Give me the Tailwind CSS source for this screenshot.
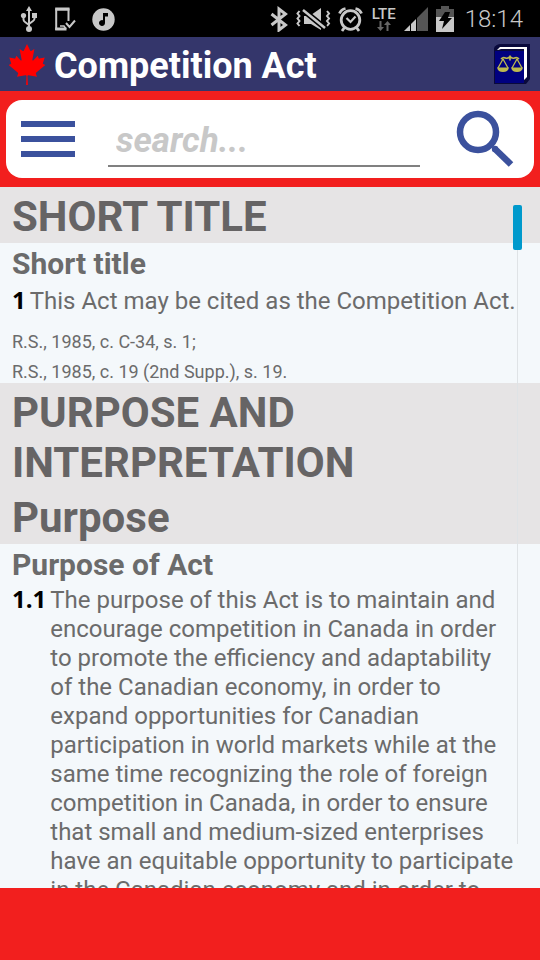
<!DOCTYPE html>
<html lang="en">
<head>
<meta charset="utf-8">
<meta name="viewport" content="width=device-width, initial-scale=1">
<title>Competition Act</title>
<script src="https://cdn.jsdelivr.net/npm/@tailwindcss/browser@4"></script>
</head>
<body class="flex h-dvh flex-col overflow-hidden bg-[#f4f8fb] font-[Roboto,'Liberation_Sans',sans-serif] text-[#6b6b6b]">

<!-- Status bar -->
<div class="flex h-[37px] shrink-0 items-center justify-between bg-black pr-[17px] pl-5 text-[#c8c8c8]">
  <div class="flex items-center gap-4">
    <svg class="h-[28px] w-[18px]" viewBox="0 0 18 28" fill="none" stroke="currentColor" stroke-width="2" aria-hidden="true">
      <path d="M9 5v19M3.500 11v3.500q0 1.500 1.500 2.500l4 3M14.500 10v3.500q0 1.500-1.500 2.500l-4 3"/>
      <path d="M9 1l3 5H6z" fill="currentColor" stroke="none"/>
      <circle cx="9" cy="24" r="3" fill="currentColor" stroke="none"/>
      <circle cx="3.500" cy="10.500" r="2.600" fill="currentColor" stroke="none"/>
      <path d="M12 8h5v5h-5z" fill="currentColor" stroke="none"/>
    </svg>
    <svg class="h-[26px] w-[22px]" viewBox="0 0 22 26" fill="none" stroke="currentColor" aria-hidden="true">
      <path d="M14.500 15V3.500H2.200v19.500H9" stroke-width="2"/>
      <path d="M1.200 3h14.300M1.200 23h11.300" stroke-width="3"/>
      <path d="M6 20h4l2 3" stroke-width="1.500"/>
      <path d="M12 17l3.500 4L21 14.500" stroke-width="2"/>
    </svg>
    <svg class="h-[24px] w-[24px]" viewBox="0 0 24 24" aria-hidden="true">
      <circle cx="11.500" cy="12.500" r="11.200" fill="currentColor"/>
      <path d="M11 6h5v3.500h-3V16a3 3 0 1 1-2-2.800z" fill="#000"/>
    </svg>
  </div>
  <div class="flex items-center gap-[7px]">
    <svg class="h-[26px] w-[18px]" viewBox="0 0 18 26" fill="none" stroke="currentColor" stroke-width="3" aria-hidden="true">
      <path d="M1.500 8l14 11-6.500 5V3l6.500 5-14 11"/>
    </svg>
    <svg class="h-[26px] w-[36px]" viewBox="0 0 36 26" fill="none" stroke="currentColor" aria-hidden="true">
      <path d="M4.500 5l-2 2.500 2 2.500-2 2.500 2 2.500-2 2.500 2 2.500M32 5l2 2.500-2 2.500 2 2.500-2 2.500 2 2.500-2 2.500" stroke-width="2"/>
      <path d="M9 10h5l12 9v5l-10-6H9zM16 9l10-7v16z" fill="currentColor" stroke="none"/>
      <path d="M8 4l22 18" stroke="#000" stroke-width="5.500"/>
      <path d="M8 4l22 18" stroke-width="2.500"/>
    </svg>
    <svg class="h-[26px] w-[26px]" viewBox="0 0 26 26" fill="none" stroke="currentColor" aria-hidden="true">
      <circle cx="12.500" cy="14" r="9.300" stroke-width="2.800"/>
      <path d="M8.500 12l4 4 5-5.500" stroke-width="2.200"/>
      <path d="M1.500 7.500q1.500-4 6-5M23.500 7.500q-1.500-4-6-5" stroke-width="2.800"/>
      <path d="M6.500 21.500L4 25M18.500 21.500L21 25" stroke-width="2.800"/>
    </svg>
    <div class="flex w-[26px] flex-col items-center">
      <span class="text-[15px] leading-[14px] font-medium">LTE</span>
      <svg class="h-[10px] w-[14px]" viewBox="0 0 14 10" fill="#666" aria-hidden="true">
        <path d="M2.500 0h2v6H7L3.500 10 0 6h2.500zM9.500 10h2V4H14l-3.500-4L7 4h2.500z"/>
      </svg>
    </div>
    <svg class="h-[26px] w-[24px]" viewBox="0 0 24 26" aria-hidden="true">
      <path d="M0 25l6-6v6z" fill="currentColor"/>
      <path d="M7 18l5-5v12H7z" fill="currentColor"/>
      <path d="M13 12l11-11v24H13z" fill="#555"/>
    </svg>
    <svg class="h-[28px] w-[20px]" viewBox="0 0 20 28" aria-hidden="true">
      <path d="M6 1h8v3h5v9H1V4h5z" fill="#555"/>
      <path d="M1 12h18v15H1z" fill="currentColor"/>
      <path d="M10 7h5l-2 6h4L7 24l2-8H4z" fill="#000"/>
    </svg>
    <time class="ml-[3px] text-[24px] leading-7 font-light">18:14</time>
  </div>
</div>

<!-- Title bar -->
<header class="flex h-[54px] shrink-0 items-center justify-between bg-[#34366b] pr-2 pl-2">
  <div class="flex items-center gap-2">
    <svg class="h-[41px] w-[38px]" viewBox="-1930 -2010 3860 4040" preserveAspectRatio="none" fill="#ff0000" aria-hidden="true">
      <path d="m-90 2030 45-863a95 95 0 0 0-111-98l-859 151 116-320a65 65 0 0 0-20-73l-941-762 212-99a65 65 0 0 0 34-79l-186-572 542 115a65 65 0 0 0 73-38l105-247 423 454a65 65 0 0 0 111-57l-204-1052 327 189a65 65 0 0 0 91-27l332-652 332 652a65 65 0 0 0 91 27l327-189-204 1052a65 65 0 0 0 111 57l423-454 105 247a65 65 0 0 0 73 38l542-115-186 572a65 65 0 0 0 34 79l212 99-941 762a65 65 0 0 0-20 73l116 320-859-151a95 95 0 0 0-111 98l45 863z"/>
    </svg>
    <h1 class="pt-1 text-[36px] leading-10 font-bold text-white">Competition Act</h1>
  </div>
  <button type="button" aria-label="Legislation" class="h-[42px] w-[40px]">
    <svg class="h-full w-full" viewBox="0 0 40 42" aria-hidden="true">
      <path d="M2 5Q4 1 9 1h29v35l-4 5H2z" fill="#0a0a3c"/>
      <path d="M5 7l3-3h27v30l-3 3V7z" fill="#fff"/>
      <path d="M6 7l3-1h23v2z" fill="#0a0a3c"/>
      <path d="M3 8h29v32H3z" fill="#000080"/>
      <g fill="none" stroke="#bdb94e" stroke-width="1.600">
        <path d="M9 16q2-2 4.500-1t4.500-1.500q2 2.500 4.500 1.500t4.500 1M18 12.500v5"/>
        <path d="M11 16l-5 9M11 16l5 9M25 16l-5 9M25 16l5 9" stroke-width="1.300"/>
      </g>
      <path d="M5 24.500h12q-1 4.500-6 4.500t-6-4.500zM19 24.500h12q-1 4.500-6 4.500t-6-4.500z" fill="#bdb94e"/>
    </svg>
  </button>
</header>

<!-- Search -->
<div class="shrink-0 bg-[#f21f1e] px-[6px] py-[9px]">
  <form class="flex h-[78px] items-center rounded-[16px] bg-white pr-5 pl-[15px]" role="search">
    <button type="button" aria-label="Menu" class="flex w-[54px] shrink-0 flex-col gap-[9px]">
      <span class="h-[6px] bg-[#3b519d]"></span>
      <span class="h-[6px] bg-[#3b519d]"></span>
      <span class="h-[6px] bg-[#3b519d]"></span>
    </button>
    <input type="search" aria-label="Search" placeholder="search..." class="mr-9 ml-[33px] h-[56px] min-w-0 flex-1 border-b-2 border-[#808080] px-2 pt-1 text-[35px] font-bold italic outline-none placeholder:text-[#c8c8c8]">
    <button type="submit" aria-label="Submit search" class="h-[58px] w-[58px] shrink-0">
      <svg class="h-full w-full" viewBox="0 0 58 58" fill="none" stroke="#3b519d" aria-hidden="true">
        <circle cx="22" cy="22" r="18" stroke-width="6.500"/>
        <path d="M38.500 38.500L55 54.500" stroke-width="6.500"/>
        <circle cx="39" cy="39" r="3.200" fill="#3b519d" stroke="none"/>
      </svg>
    </button>
  </form>
</div>

<!-- Document -->
<div class="relative min-h-0 flex-1">
  <main class="h-full overflow-y-auto [scrollbar-width:none]">
    <div class="bg-[#e6e4e5] px-3 pt-[5px] pb-px text-[42px] leading-[50px] font-bold text-[#666465]">
      <h2>SHORT TITLE</h2>
    </div>
    <section class="px-3 pt-1">
      <h3 class="text-[30px] leading-[34px] font-bold">Short title</h3>
      <div class="mt-1 flex items-baseline gap-1 text-[24px] leading-[29px]">
        <b class="font-[Open_Sans,sans-serif] text-black">1</b>
        <p>This Act may be cited as the Competition Act.</p>
      </div>
      <div class="mt-[15px] flex flex-col gap-2 text-[18px] leading-[22px]">
        <p>R.S., 1985, c. C-34, s. 1;</p>
        <p>R.S., 1985, c. 19 (2nd Supp.), s. 19.</p>
      </div>
    </section>
    <div class="bg-[#e6e4e5] px-3 pt-[5px] pb-px text-[42px] leading-[50px] font-bold text-[#666465]">
      <h2>PURPOSE AND INTERPRETATION</h2>
      <h2 class="mt-[5px]">Purpose</h2>
    </div>
    <section class="pt-1 pr-6 pl-3">
      <h3 class="text-[30px] leading-[34px] font-bold">Purpose of Act</h3>
      <div class="mt-[2px] flex items-baseline gap-1 text-[24px] leading-[29px]">
        <b class="font-[Open_Sans,sans-serif] text-black">1.1</b>
        <p>The purpose of this Act is to maintain and encourage competition in Canada in order to promote the efficiency and adaptability of the Canadian economy, in order to expand opportunities for Canadian participation in world markets while at the same time recognizing the role of foreign competition in Canada, in order to ensure that small and medium-sized enterprises have an equitable opportunity to participate in the Canadian economy and in order to</p>
      </div>
    </section>
  </main>
  <div class="pointer-events-none absolute top-[18px] right-[18px] bottom-11 flex w-[9px] justify-center" aria-hidden="true">
    <div class="w-px bg-[#dfe3e6]"></div>
    <div class="absolute top-0 h-[45px] w-[9px] rounded-[2px] bg-[#0099cc]"></div>
  </div>
</div>

<footer class="h-[72px] shrink-0 bg-[#f21f1e]"></footer>
</body>
</html>
